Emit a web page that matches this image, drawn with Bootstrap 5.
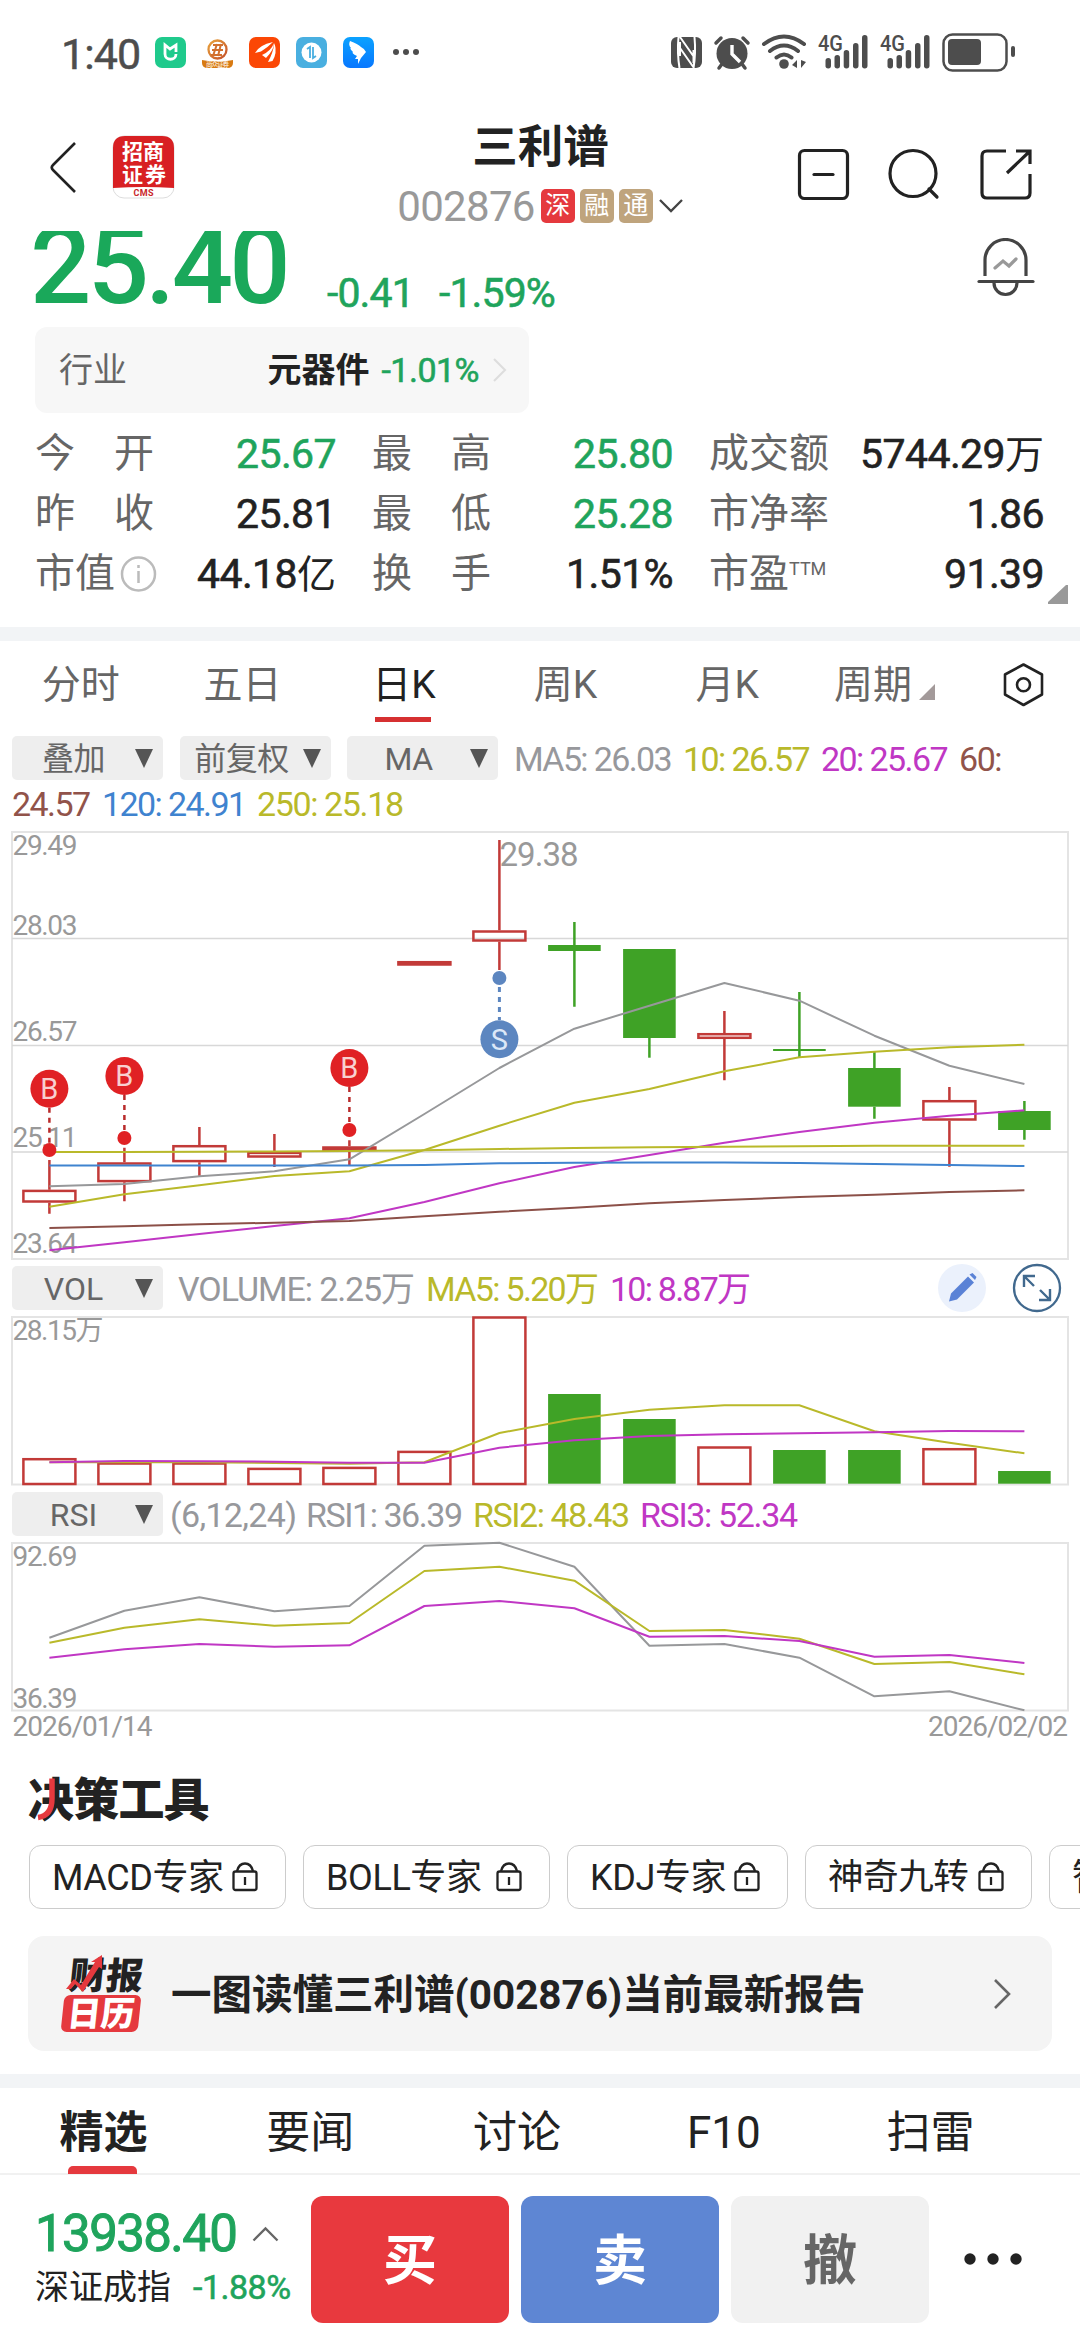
<!DOCTYPE html>
<html lang="zh-CN">
<head>
<meta charset="utf-8">
<meta name="viewport" content="width=device-width, initial-scale=1">
<title>三利谱 002876</title>
<link href="https://cdn.jsdelivr.net/npm/bootstrap@5.3.0/dist/css/bootstrap.min.css" rel="stylesheet">
<style>
body{width:1080px;height:2340px;overflow:hidden;background:#fff;color:#222;font-family:Roboto,"Noto Sans CJK SC",sans-serif;line-height:1;white-space:nowrap}
svg{display:block;flex:none}
svg text{font-family:Roboto,"Noto Sans CJK SC",sans-serif}
.up-g{color:#1fa45c}
.semi{font-weight:400;-webkit-text-stroke:.6px currentColor}
.statusbar{height:104px;padding:0 65px 0 61px;color:#4d4d4d}
.clock{font-size:43px;width:94px;letter-spacing:-.9px;-webkit-text-stroke:.5px #4d4d4d}
.topbar{height:127px;padding:0 48px 0 49px}
.topside{width:300px}
.stock-name{font-size:45.500px;font-weight:700;line-height:50px}
.stock-code{font-size:42px;letter-spacing:-.7px;color:#999}
.tagbox{width:34px;height:34px;border-radius:5px;color:#fff;font-size:25px;line-height:34px;text-align:center;margin-right:5px}
.pricerow{height:96px;overflow:hidden;padding:0 45px 0 30px}
.bigprice{font-size:108px;line-height:74px;font-weight:500;letter-spacing:-3.7px;width:297px;margin-top:-2px;color:#1aa85a}
.chg{font-size:41px;line-height:41px;margin-top:42px;letter-spacing:-.9px}
.industry{width:494px;height:86px;margin-left:35px;background:#f7f7f7;border-radius:12px;padding:0 21px 0 24px;font-size:34px}
.stats{display:grid;grid-template-columns:301px 301px 335px;column-gap:36px;padding:11px 36px 0 35px;height:214px;grid-auto-rows:60px;font-size:40px;position:relative}
.stat-l{color:#666;display:flex;justify-content:space-between;width:119px}
.stat-v{font-size:41px;letter-spacing:-.6px}
.stat-v i{font-style:normal;font-size:39px;letter-spacing:0;-webkit-text-stroke:0}
.corner{position:absolute;right:12px;top:171px}
.band{height:14px;background:#f2f4f6}
.ktabs{height:95px;font-size:39px;color:#666}
.ktab{width:161.6px;height:88px;text-align:center;line-height:89px;position:relative}
.ktab.on{color:#222}
.ktab.on::after{content:"";position:absolute;left:52px;bottom:7px;width:56px;height:5px;background:#d63031}
.pick{width:151px;height:44px;background:#eee;border-radius:5px;color:#666;font-size:32px;padding-right:10px;flex:none}
.pick b{flex:1;font-weight:400;text-align:center;padding-top:2px}
.ind{font-size:34px;letter-spacing:-.55px}
.h-tools{font-size:46px;font-weight:900;line-height:52px;letter-spacing:-.8px;position:relative;width:190px}
.h-tools svg{position:absolute;left:0;top:0}
.tchips{height:64px;padding-left:29px;gap:17px;overflow:hidden}
.tchip{height:64px;border:1px solid #ccc;border-radius:12px;font-size:36px;padding:2px 27px 0 22px;flex:none;letter-spacing:-.4px}
.tchip svg{margin-top:-2px}
.banner{height:115px;margin:27px 28px 0;background:#f4f4f4;border-radius:16px;padding:0 40px 0 33px;font-size:40.500px;font-weight:700}
.ntabs{height:87px;border-bottom:2px solid #f1f1f1;font-size:44px}
.ntab{width:206.8px;line-height:90px;height:86px;text-align:center;position:relative}
.ntab.on{font-weight:700}
.ntab.on::after{content:"";position:absolute;left:68px;bottom:0;width:69px;height:8px;border-radius:5px 5px 0 0;background:#e5393e}
.trade{height:165px;padding:21px 0 0 35px}
.idx{width:276px}
.idxnum{font-size:51px;letter-spacing:-1.6px;line-height:54px;width:217px;-webkit-text-stroke:1px currentColor}
.tbtn{width:198px;height:127px;border-radius:12px;font-size:54px;font-weight:700;line-height:131px;text-align:center;margin-right:12px;color:#fff;flex:none}
</style>
<script src="https://cdn.jsdelivr.net/npm/bootstrap@5.3.0/dist/js/bootstrap.bundle.min.js"></script>
</head>
<body>

<header class="statusbar d-flex align-items-center">
  <div class="clock pt-1">1:40</div>
  <svg width="280" height="38" viewBox="155 33 280 38">
    <defs>
      <linearGradient id="ding" x2="0" y2="1"><stop stop-color="#0ba2ff"/><stop offset="1" stop-color="#0877ff"/></linearGradient>
      <linearGradient id="gold" x2="1" y2="1"><stop stop-color="#e9a33c"/><stop offset="1" stop-color="#c4502a"/></linearGradient>
    </defs>
    <rect x="155" y="37" width="31" height="31" rx="7" fill="#1fca8c"/>
    <path d="M165 54V45l5 4 6-4v7M165 54c0 7 11 7 11 0" fill="none" stroke="#fff" stroke-width="2.8"/>
    <circle cx="217.500" cy="49.500" r="9" fill="none" stroke="url(#gold)" stroke-width="2.300"/>
    <path d="M213 45h10M212 50h11M211 55h11M217 44l-4 12M221 44l-3 12" stroke="#d2702e" stroke-width="2" fill="none"/>
    <path d="M202 60q15.500 3 31 0v3q0 5-6 5h-19q-6 0-6-5z" fill="#d87a12"/>
    <text x="206" y="67" font-size="6.500" fill="#fff" textLength="23">尚众证券</text>
    <rect x="249" y="37" width="31" height="31" rx="7" fill="#fb4705"/>
    <path d="M255 53q4-8 18-11-6 6-12 9.500zM262 55q9-4 12-12 0 7-8 15zM268 62q5-9 6.500-19 3 10-2 18z" fill="#fff"/>
    <rect x="296" y="37" width="31" height="31" rx="7" fill="#49afe0"/>
    <circle cx="311.500" cy="52.500" r="10" fill="#fff"/>
    <path d="M307 49l3-2v11M313 47v11l3-2" stroke="#49afe0" stroke-width="1.800" fill="none"/>
    <rect x="343" y="37" width="31" height="31" rx="7" fill="url(#ding)"/>
    <path d="M350 41q8 3 11 6 4 2 5 5l-5 6-3 6 0-5h-3l2-3q-6-3-4-4-4-4-2-4-3-3-1-7z" fill="#fff"/>
    <g fill="#4d4d4d"><circle cx="396" cy="52" r="3"/><circle cx="406" cy="52" r="3"/><circle cx="416" cy="52" r="3"/></g>
  </svg>
  <svg class="ms-auto" width="344" height="40" viewBox="671 32 344 40">
    <g fill="#4d4d4d">
      <rect x="671" y="37" width="31" height="31" rx="6"/>
      <circle cx="732" cy="53.500" r="15.500"/>
      <path d="M732 45v9l8 8" fill="none" stroke="#fff" stroke-width="3.400"/>
      <path d="M716 43l5-5M743 38l5 5M722 64l-3 4M742 64l3 4" stroke="#4d4d4d" stroke-width="3.500" stroke-linecap="round"/>
    </g>
    <path d="M678.500 37q-1.500 16 1 31M694.500 37q1.500 16-1 31M680 37l14 20M680 48l14 20M680 42v14M693.500 50v13" stroke="#fff" stroke-width="2" fill="none"/>
    <g fill="none" stroke="#4d4d4d" stroke-width="4" stroke-linecap="round">
      <path d="M764 44q20-15 40 0M770 51q14-11 28 0M776.500 57.500q7.500-6 15 0"/>
    </g>
    <circle cx="784" cy="64" r="4.800" fill="#4d4d4d"/>
    <path d="M792 65l5-5v8zM806 62l-5 6v-8z" fill="#4d4d4d"/>
    <g id="sig" fill="#4d4d4d">
      <text x="818" y="51" font-size="22" font-weight="500" textLength="25" lengthAdjust="spacingAndGlyphs">4G</text>
      <rect x="825.500" y="58" width="5.500" height="10.500" rx="2.700"/><rect x="834.500" y="55" width="5.500" height="13.500" rx="2.700"/>
      <rect x="843.700" y="50" width="5.500" height="18.500" rx="2.700"/><rect x="853" y="43" width="5.500" height="25.500" rx="2.700"/><rect x="862" y="35" width="5.500" height="33.500" rx="2.700"/>
    </g>
    <use href="#sig" x="62"/>
    <rect x="943.500" y="34.500" width="63" height="36" rx="9" fill="none" stroke="#4d4d4d" stroke-width="2.500"/>
    <rect x="948" y="39" width="33" height="26" rx="4" fill="#4d4d4d"/>
    <rect x="1011" y="46" width="4" height="11" rx="2" fill="#4d4d4d"/>
  </svg>
</header>

<nav class="topbar d-flex justify-content-between">
  <div class="topside pt-4">
    <svg width="130" height="72" viewBox="49 128 130 72">
      <path d="M75 143L53 165q-2.500 2.500 0 5l22 22" fill="none" stroke="#222" stroke-width="2.600"/>
      <rect x="113" y="136" width="61" height="62" rx="11" fill="#fff" stroke="#ddd" stroke-width="1"/>
      <path d="M113 188V148q0-12 12-12h37q12 0 12 12v40q-30-2-61 0z" fill="#d82023"/>
      <g fill="#fff" font-weight="700" font-size="21"><text x="122" y="159" textLength="42">招商</text><text x="122" y="182" textLength="44">证券</text></g>
      <text x="133.500" y="196" font-size="9" font-weight="700" fill="#c8262b" textLength="20">CMS</text>
    </svg>
  </div>
  <div class="d-flex flex-column align-items-center" style="padding-top:19px">
    <div class="stock-name">三利谱</div>
    <div class="d-flex align-items-center" style="margin-top:10px">
      <span class="stock-code" style="margin-right:6px;padding-top:3px">002876</span>
      <span class="tagbox" style="background:#e5393e">深</span><span class="tagbox" style="background:#bfa47d">融</span><span class="tagbox" style="background:#bfa47d">通</span>
      <svg width="26" height="16" viewBox="0 0 26 16"><path d="M2 2l11 11L24 2" fill="none" stroke="#444" stroke-width="2.300"/></svg>
    </div>
  </div>
  <div class="topside d-flex justify-content-end">
    <svg width="236" height="60" viewBox="796 146 236 60" style="margin-top:42px">
      <g fill="none" stroke="#222" stroke-width="3.200" stroke-linecap="round">
        <rect x="799.500" y="150.500" width="48" height="48" rx="5"/><path d="M814 174.500h19"/>
        <circle cx="913" cy="173.500" r="23"/><path d="M929 189l8 8"/>
        <path d="M1006 151h-19q-5 0-5 5v37q0 5 5 5h38q5 0 5-5v-19M1016 151h14v13M1030 151l-23 22" stroke-linecap="butt"/>
      </g>
    </svg>
  </div>
</nav>

<section class="pricerow d-flex">
  <div class="bigprice">25.40</div>
  <div class="chg up-g semi" style="width:112px">-0.41</div>
  <div class="chg up-g semi">-1.59%</div>
  <svg class="ms-auto" style="margin-top:7px" width="58" height="60" viewBox="0 0 58 60"><g fill="none" stroke="#444" stroke-width="3.200" stroke-linecap="round"><path d="M8 38V22a20.500 20.500 0 0 1 41 0v16" stroke-linecap="butt"/><path d="M2 43.500h54"/><path d="M17 45a11.500 11.500 0 0 0 23 0"/><path d="M18 30l8-7 6 5 7-7" stroke="#999"/></g></svg>
</section>

<section class="industry d-flex align-items-center">
  <span style="color:#666">行业</span>
  <span class="fw-bold ms-auto">元器件</span>
  <span class="up-g semi" style="margin-left:12px;letter-spacing:-.5px">-1.01%</span>
  <svg style="margin-left:13px" width="16" height="26" viewBox="0 0 16 26"><path d="M2 2l11 11L2 24" fill="none" stroke="#ddd" stroke-width="2"/></svg>
</section>

<section class="stats">
  <div class="d-flex align-items-center justify-content-between"><span class="stat-l"><span>今</span><span>开</span></span><span class="stat-v semi up-g">25.67</span></div>
  <div class="d-flex align-items-center justify-content-between"><span class="stat-l"><span>最</span><span>高</span></span><span class="stat-v semi up-g">25.80</span></div>
  <div class="d-flex align-items-center justify-content-between"><span class="stat-l">成交额</span><span class="stat-v semi">5744.29<i>万</i></span></div>
  <div class="d-flex align-items-center justify-content-between"><span class="stat-l"><span>昨</span><span>收</span></span><span class="stat-v semi">25.81</span></div>
  <div class="d-flex align-items-center justify-content-between"><span class="stat-l"><span>最</span><span>低</span></span><span class="stat-v semi up-g">25.28</span></div>
  <div class="d-flex align-items-center justify-content-between"><span class="stat-l">市净率</span><span class="stat-v semi">1.86</span></div>
  <div class="d-flex align-items-center justify-content-between"><span class="stat-l" style="width:122px">市值<svg width="37" height="40" viewBox="0 0 37 40"><circle cx="18.500" cy="20" r="16.500" fill="none" stroke="#bbb" stroke-width="2.500"/><path d="M18.500 17v12M18.500 11v3" stroke="#bbb" stroke-width="2.500"/></svg></span><span class="stat-v semi">44.18<i>亿</i></span></div>
  <div class="d-flex align-items-center justify-content-between"><span class="stat-l"><span>换</span><span>手</span></span><span class="stat-v semi">1.51%</span></div>
  <div class="d-flex align-items-center justify-content-between"><span class="stat-l justify-content-start">市盈<span style="font-size:18px;padding-top:6px">TTM</span></span><span class="stat-v semi">91.39</span></div>
  <svg class="corner" width="20" height="20" viewBox="0 0 20 20"><path d="M20 1v19H0v-2L18 1z" fill="#999"/></svg>
</section>
<div class="band"></div>

<nav class="ktabs d-flex">
  <div class="ktab">分时</div><div class="ktab">五日</div><div class="ktab on">日K</div><div class="ktab">周K</div><div class="ktab">月K</div>
  <div class="ktab d-flex align-items-center" style="padding-left:26px;line-height:1">周期<svg style="margin:14px 0 0 7px" width="16" height="16" viewBox="0 0 16 16"><path d="M16 0v16H0z" fill="#a39a9a"/></svg></div>
  <svg style="margin:21px 0 0 33px" width="42" height="46" viewBox="0 0 42 46"><g fill="none" stroke="#222" stroke-width="2.600" stroke-linejoin="round"><path d="M20.500 2.500L39 12.500v20L20.500 43 2 32.500v-20z"/><circle cx="20.500" cy="22.700" r="6.500"/></g></svg>
</nav>

<section style="height:90px">
  <div class="d-flex align-items-center ind" style="padding-left:12px">
    <div class="pick d-flex align-items-center"><b>叠加</b><svg width="18" height="20"><path d="M0 1h18L9 20z" fill="#555"/></svg></div>
    <div class="pick d-flex align-items-center" style="margin-left:17px"><b>前复权</b><svg width="18" height="20"><path d="M0 1h18L9 20z" fill="#555"/></svg></div>
    <div class="pick d-flex align-items-center" style="margin:0 16px"><b>MA</b><svg width="18" height="20"><path d="M0 1h18L9 20z" fill="#555"/></svg></div>
    <svg width="500" height="44"><g font-size="34"><text x="0" y="35" fill="#97989c" textLength="158">MA5: 26.03</text><text x="169" y="35" fill="#b9b92a" textLength="127">10: 26.57</text><text x="307" y="35" fill="#c037c4" textLength="127">20: 25.67</text><text x="445" y="35" fill="#91534a" textLength="43">60:</text></g></svg>
  </div>
  <svg width="1080" height="46"><g font-size="34"><text x="12" y="36" fill="#91534a" textLength="79">24.57</text><text x="102" y="36" fill="#3f83cf" textLength="145">120: 24.91</text><text x="257" y="36" fill="#b9b92a" textLength="147">250: 25.18</text></g></svg>
</section>

<svg width="1080" height="440" viewBox="0 826 1080 440">
  <g fill="none" stroke="#e4e4e4" stroke-width="2"><rect x="12" y="832" width="1056" height="427"/><path d="M12 938.500h1056M12 1045.500h1056M12 1152h1056" stroke="#d8d8d8" stroke-width="1.500"/></g>
  <g font-size="28" fill="#999"><text x="12.500" y="855" textLength="65">29.49</text><text x="12.500" y="935" textLength="65">28.03</text><text x="12.500" y="1041" textLength="65">26.57</text><text x="12.500" y="1147" textLength="65">25.11</text><text x="12.500" y="1253" textLength="65">23.64</text><text x="499.500" y="866" font-size="33" textLength="79">29.38</text></g>
  <g id="candles" stroke-width="2.500"></g>
  <g id="malines" fill="none" stroke-width="2" stroke-linejoin="round"></g>
  <g id="marks" font-size="29" text-anchor="middle"></g>
</svg>

<div class="d-flex align-items-center" style="height:44px;padding-left:12px">
  <div class="pick d-flex align-items-center"><b>VOL</b><svg width="18" height="20"><path d="M0 1h18L9 20z" fill="#555"/></svg></div>
  <svg width="590" height="44" style="margin-left:15px"><g font-size="34"><text x="0" y="35" fill="#97989c" textLength="237">VOLUME: 2.25万</text><text x="248" y="35" fill="#b9b92a" textLength="173">MA5: 5.20万</text><text x="432" y="35" fill="#c037c4" textLength="141">10: 8.87万</text></g></svg>
  <svg class="ms-auto" style="margin-right:18px" width="125" height="50" viewBox="937 1263 125 50">
    <circle cx="962" cy="1288" r="24" fill="#ebf1fc"/><path d="M949 1301.500l2-8 17-17 6 6-17 17zM969.500 1274.500l3-1.500 4 4-1.500 3z" fill="#5a82d6"/>
    <circle cx="1037" cy="1288" r="23" fill="none" stroke="#41698e" stroke-width="2.300"/><g fill="none" stroke="#41698e" stroke-width="2.400"><path d="M1024 1287v-11h11M1024 1276l10 10M1050 1289v11h-11M1050 1300l-10-10"/></g>
  </svg>
</div>
<svg width="1080" height="182" viewBox="0 1310 1080 182">
  <rect x="12" y="1317" width="1056" height="167.500" fill="none" stroke="#e4e4e4" stroke-width="2"/>
  <text x="12.500" y="1340" font-size="28" fill="#999" textLength="91">28.15万</text>
  <g id="vols" stroke-width="2.500"></g><g id="vollines" fill="none" stroke-width="2"></g>
</svg>

<div class="d-flex align-items-center" style="height:44px;padding-left:12px">
  <div class="pick d-flex align-items-center"><b>RSI</b><svg width="18" height="20"><path d="M0 1h18L9 20z" fill="#555"/></svg></div>
  <svg width="680" height="44" style="margin-left:7px"><g font-size="34"><text x="0" y="35" fill="#97989c" textLength="127">(6,12,24)</text><text x="136" y="35" fill="#97989c" textLength="157">RSI1: 36.39</text><text x="303" y="35" fill="#b9b92a" textLength="157">RSI2: 48.43</text><text x="470" y="35" fill="#c037c4" textLength="158">RSI3: 52.34</text></g></svg>
</div>
<svg width="1080" height="218" viewBox="0 1536 1080 218">
  <rect x="12" y="1543" width="1056" height="167.500" fill="none" stroke="#e4e4e4" stroke-width="2"/>
  <g font-size="28" fill="#999"><text x="12.500" y="1566" textLength="65">92.69</text><text x="12.500" y="1708" textLength="65">36.39</text><text x="12.500" y="1736" textLength="140">2026/01/14</text><text x="928" y="1736" textLength="140">2026/02/02</text></g>
  <g id="rsilines" fill="none" stroke-width="2" stroke-linejoin="round"></g>
</svg>

<section style="height:91px;padding:20px 0 0 28px">
  <div class="h-tools">决策工具<svg width="50" height="50" viewBox="0 0 50 50"><path d="M24 4.500v20q0 17-14 19" fill="none" stroke="#e5393e" stroke-width="5.500"/></svg></div>
</section>
<div class="tchips d-flex">
  <div class="tchip d-flex align-items-center" style="width:257px">MACD专家<svg class="ms-auto" width="26" height="30" viewBox="0 0 26 30"><g fill="none" stroke="#222" stroke-width="2.300"><rect x="1.500" y="9.500" width="23" height="18.500" rx="2"/><path d="M5 9q2-7.500 8-7.500T21 9M13 15v8"/></g></svg></div>
  <div class="tchip d-flex align-items-center" style="width:247px">BOLL专家<svg class="ms-auto" width="26" height="30" viewBox="0 0 26 30"><g fill="none" stroke="#222" stroke-width="2.300"><rect x="1.500" y="9.500" width="23" height="18.500" rx="2"/><path d="M5 9q2-7.500 8-7.500T21 9M13 15v8"/></g></svg></div>
  <div class="tchip d-flex align-items-center" style="width:221px">KDJ专家<svg class="ms-auto" width="26" height="30" viewBox="0 0 26 30"><g fill="none" stroke="#222" stroke-width="2.300"><rect x="1.500" y="9.500" width="23" height="18.500" rx="2"/><path d="M5 9q2-7.500 8-7.500T21 9M13 15v8"/></g></svg></div>
  <div class="tchip d-flex align-items-center" style="width:227px;font-size:35.500px">神奇九转<svg class="ms-auto" width="26" height="30" viewBox="0 0 26 30"><g fill="none" stroke="#222" stroke-width="2.300"><rect x="1.500" y="9.500" width="23" height="18.500" rx="2"/><path d="M5 9q2-7.500 8-7.500T21 9M13 15v8"/></g></svg></div>
  <div class="tchip d-flex align-items-center" style="width:227px">智能</div>
</div>

<section class="banner d-flex align-items-center">
  <svg width="84" height="84" viewBox="0 0 84 84">
    <g transform="skewX(-6)"><text x="11" y="37" font-size="37" font-weight="900" fill="#222" textLength="74" lengthAdjust="spacingAndGlyphs">财报</text>
    <rect x="8" y="43" width="77" height="37" rx="6" fill="#e5393e"/><text x="13" y="74.500" font-size="34" font-weight="900" fill="#fff" textLength="67" lengthAdjust="spacingAndGlyphs">日历</text></g>
    <path d="M5 37l8-10 7 6 14-23-4 0 11-7v14l-3-2-16 25-8-8-4 5z" fill="#e5393e"/>
  </svg>
  <span style="margin-left:26px;padding-top:3px">一图读懂三利谱(002876)当前最新报告</span>
  <svg class="ms-auto" width="20" height="32" viewBox="0 0 20 32"><path d="M3 2l14 14L3 30" fill="none" stroke="#666" stroke-width="2.600"/></svg>
</section>
<div class="band" style="margin-top:23px"></div>

<nav class="ntabs d-flex">
  <div class="ntab on">精选</div><div class="ntab">要闻</div><div class="ntab">讨论</div><div class="ntab">F10</div><div class="ntab">扫雷</div>
</nav>

<footer class="trade d-flex">
  <div class="idx" style="padding-top:11px">
    <div class="d-flex align-items-center up-g"><span class="idxnum">13938.40</span><svg width="27" height="16" viewBox="0 0 27 16"><path d="M1.500 14.500l12-12 12 12" fill="none" stroke="#666" stroke-width="2.300"/></svg></div>
    <div class="d-flex align-items-center" style="font-size:34px;margin-top:9px"><span>深证成指</span><span class="up-g semi" style="margin-left:22px;letter-spacing:-.5px">-1.88%</span></div>
  </div>
  <div class="tbtn" style="background:#e8393e">买</div>
  <div class="tbtn" style="background:#5e86d3">卖</div>
  <div class="tbtn" style="background:#f1f1f1;color:#666">撤</div>
  <svg style="margin:52px 0 0 12px" width="70" height="22" viewBox="0 0 70 22"><g fill="#222"><circle cx="17" cy="11" r="5.700"/><circle cx="40" cy="11" r="5.700"/><circle cx="63" cy="11" r="5.700"/></g></svg>
</footer>

<script>
const X = i => 49.4 + 75 * i;
const RED = '#c23a38', GREEN = '#3fa226';
const put = (id, s) => document.getElementById(id).innerHTML = s;
const line = (ys, c) => `<polyline stroke="${c}" points="${ys.map((y, i) => X(i) + ',' + y).join(' ')}"/>`;

// kind, high, body top, body bottom, low
const candles = [
 ['r',1160,1189.7,1202.7,1213.7],['r',1147.7,1162.3,1182.3,1201.3],['r',1127,1145,1162.3,1176.3],['r',1134,1151.7,1157.7,1167],
 ['r',1140.3,1146.3,1151,1165.7],['r',961,961,965.7,965.7],['r',840,930.3,941.7,970],['g',922,945,951,1006.7],
 ['g',949,949,1038,1057.7],['r',1011,1033,1039,1080.3],['g',992,1049,1051,1057],['g',1052,1068,1106.7,1118.7],
 ['r',1087,1100,1120.7,1166.7],['g',1101,1111,1130,1139.7]];
put('candles', candles.map(([k,h,t,b,l], i) => {
  const x = X(i), c = k === 'r' ? RED : GREEN;
  const wick = `<path d="M${x} ${h}V${t}M${x} ${b}V${l}" stroke="${c}"/>`;
  return wick + (k === 'r'
    ? `<rect x="${x-26}" y="${t+1.2}" width="52" height="${b-t-2.4}" fill="${b-t < 5 ? c : 'none'}" stroke="${c}"/>`
    : `<rect x="${x-26.3}" y="${t}" width="52.6" height="${b-t}" fill="${c}"/>`);
}).join(''));
put('malines',
  line([1186.3,1184,1176.3,1171.3,1159.3,1114,1068,1028.7,1005.7,983,1000.7,1035.7,1065.7,1084], '#97989a') +
  line([1206.7,1194.3,1185.3,1176,1171.3,1150,1125.7,1102.7,1089,1071.3,1057.3,1051.7,1047.3,1044.7], '#b9b92a') +
  line([1250.3,1242.3,1234,1226,1218.3,1202,1183.3,1167,1155,1142.7,1132,1122.7,1115.7,1110.3], '#c037c4') +
  line([1228,1226.3,1224.3,1222.7,1221,1216.3,1211.7,1207.7,1203.3,1200,1197,1194.7,1192,1190.3], '#8c5048') +
  line([1165.5,1165.5,1165.5,1165.5,1165.5,1165,1163.3,1162.7,1162.5,1162.5,1163,1164,1165,1166], '#3f83cf') +
  line([1152,1152,1151.8,1151.5,1151,1150.3,1149,1148,1147.3,1146.7,1146.2,1145.8,1145.7,1145.8], '#b9b92a'));
put('marks', [[0,1088.7,1150],[1,1076,1138],[4,1068,1130]].map(([i,y,d]) =>
  `<path d="M${X(i)} ${y+19}V${d}" stroke="#b92b2b" stroke-width="2.500" stroke-dasharray="5 5"/><circle cx="${X(i)}" cy="${d}" r="7" fill="#e02124"/><circle cx="${X(i)}" cy="${y}" r="19" fill="#e02124"/><text x="${X(i)}" y="${y+10}" fill="#f8d0d0">B</text>`).join('') +
  `<path d="M${X(6)} 987V1020" stroke="#5c86c0" stroke-width="3" stroke-dasharray="5 5"/><circle cx="${X(6)}" cy="978" r="7" fill="#5c86c0"/><circle cx="${X(6)}" cy="1039.300" r="19" fill="#5c86c0"/><text x="${X(6)}" y="1049.500" fill="#dce8f8">S</text>`);

const vols = [['r',1458],['r',1462.3],['r',1462.3],['r',1467.7],['r',1466.7],['r',1450.7],['r',1316.3],['g',1394],['g',1419],['r',1446.3],['g',1450],['g',1450],['r',1448],['g',1471]];
put('vols', vols.map(([k,t], i) => k === 'r'
  ? `<rect x="${X(i)-26}" y="${t+1.2}" width="52" height="${1484-t-1.2}" fill="none" stroke="${RED}"/>`
  : `<rect x="${X(i)-26.3}" y="${t}" width="52.600" height="${1483.700-t}" fill="${GREEN}"/>`).join(''));
put('vollines',
  line([1462.3,1462.3,1462.3,1463,1463.7,1462.3,1433,1419,1409.7,1405.3,1405.3,1431.3,1442.7,1453.3], '#b9b92a') +
  line([1462.3,1461,1461.3,1461.7,1462.7,1462.7,1447.7,1440.3,1436,1434.3,1433.3,1432.3,1431,1431.3], '#c037c4'));
put('rsilines',
  line([1637.7,1610.7,1597.3,1611.3,1606,1545.7,1542.7,1566.7,1645.7,1644,1657.7,1696.3,1691.3,1710.3], '#97989a') +
  line([1642.7,1627.7,1619.3,1625.7,1623,1571,1566.7,1580.7,1631,1630,1638.7,1664,1662,1674.3], '#b9b92a') +
  line([1657.7,1649.3,1644,1646.7,1645.3,1606,1601,1608.3,1636.7,1636,1641,1656.7,1655,1663], '#c037c4'));
</script>
</body>
</html>
